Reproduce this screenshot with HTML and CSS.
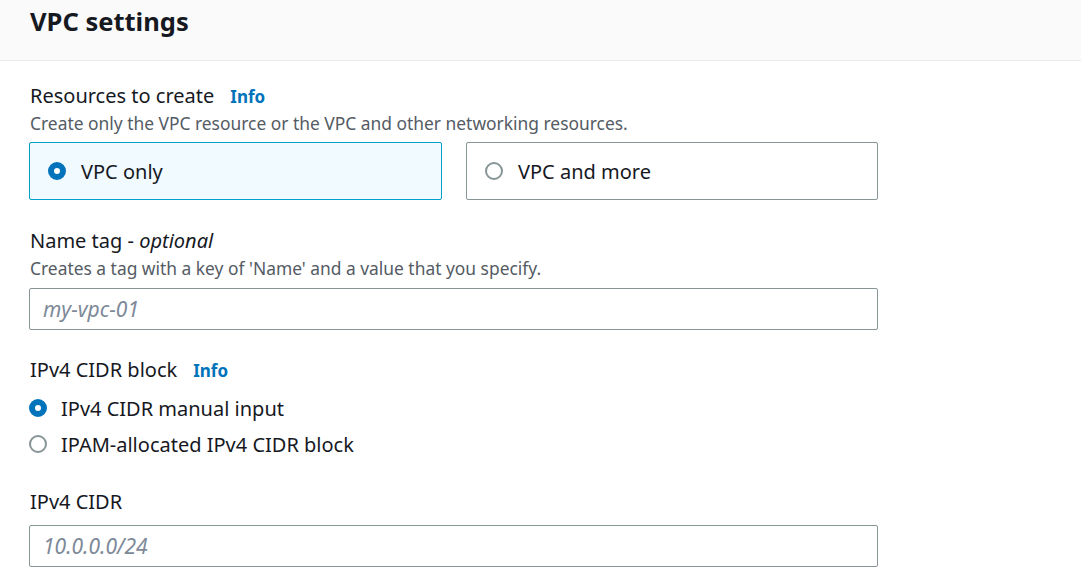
FILE: index.html
```html
<!DOCTYPE html>
<html lang="en">
<head>
<meta charset="utf-8">
<title>VPC settings</title>
<link rel="stylesheet" href="styles.css">
</head>
<body>
<div class="panel">
  <div class="panel-header">
    <h2 class="panel-title">VPC settings</h2>
  </div>
  <div class="panel-body">
    <div class="field">
      <div class="label-row"><span class="label">Resources to create</span><a class="info">Info</a></div>
      <div class="desc">Create only the VPC resource or the VPC and other networking resources.</div>
      <div class="tiles">
        <div class="tile tile-selected"><span class="radio radio-checked"></span><span class="tile-text">VPC only</span></div>
        <div class="tile"><span class="radio"></span><span class="tile-text">VPC and more</span></div>
      </div>
    </div>
    <div class="field field-name">
      <div class="label-row"><span class="label">Name tag - <i>optional</i></span></div>
      <div class="desc desc-name">Creates a tag with a key of 'Name' and a value that you specify.</div>
      <div class="input"><span class="placeholder">my-vpc-01</span></div>
    </div>
    <div class="field field-radios">
      <div class="label-row"><span class="label">IPv4 CIDR block</span><a class="info">Info</a></div>
      <div class="radio-list">
        <div class="radio-item"><span class="radio radio-checked"></span><span class="radio-text">IPv4 CIDR manual input</span></div>
        <div class="radio-item"><span class="radio"></span><span class="radio-text">IPAM-allocated IPv4 CIDR block</span></div>
      </div>
    </div>
    <div class="field">
      <div class="label-row"><span class="label">IPv4 CIDR</span></div>
      <div class="input input-gap"><span class="placeholder">10.0.0.0/24</span></div>
    </div>
  </div>
</div>
</body>
</html>
```

FILE: styles.css
```css
* { box-sizing: border-box; }
html, body { margin: 0; padding: 0; background: #fff; }
body {
  font-family: "Noto Sans", "Open Sans", sans-serif;
  color: #16191f;
}
.panel-header {
  background: #fafafa;
  border-bottom: 1px solid #eaeded;
  height: 61px;
  padding: 0 30px;
}
.panel-title {
  margin: 0;
  font-size: 25.5px;
  font-weight: 700;
  line-height: 34px;
  padding-top: 4px;
}
.panel-body {
  padding: 20px 0 0 29px;
  width: 878px;
}
.field { margin-bottom: 26px; }
.field-name { margin-bottom: 25px; }
.field-radios { margin-bottom: 25px; }
.label-row {
  display: flex;
  align-items: baseline;
  gap: 16px;
  padding-left: 1px;
  height: 29px;
  line-height: 29px;
}
.label { font-size: 20px; }
.label i { font-style: italic; }
.info {
  color: #0073bb;
  font-weight: 700;
  font-size: 17px;
}
.desc {
  font-size: 17.4px;
  color: #545b64;
  line-height: 26px;
  padding-left: 1px;
  margin-bottom: 6px;
}
.desc-name { margin-bottom: 7px; }
.tiles {
  display: grid;
  grid-template-columns: 413px 412px;
  gap: 24px;
}
.tile {
  height: 58px;
  border: 1px solid #879596;
  border-radius: 2px;
  display: flex;
  align-items: center;
  padding-left: 18px;
  gap: 15px;
}
.tile-selected {
  border-color: #00a1c9;
  background: #f1faff;
}
.tile-text { font-size: 20px; }
.radio {
  width: 18px;
  height: 18px;
  border-radius: 50%;
  border: 2px solid #879596;
  background: #fff;
  flex: none;
}
.radio-checked {
  border: 6px solid #0073bb;
}
.input {
  height: 42px;
  border: 1px solid #879596;
  border-radius: 2px;
  display: flex;
  align-items: center;
  padding-left: 13px;
}
.placeholder {
  font-style: italic;
  color: #7d8998;
  font-size: 21px;
}
.input-gap { margin-top: 9px; }
.radio-list { padding-top: 6px; }
.radio-item {
  display: flex;
  align-items: center;
  gap: 14px;
  height: 36px;
  padding-left: 0;
}
.radio-text { font-size: 20px; }
```
